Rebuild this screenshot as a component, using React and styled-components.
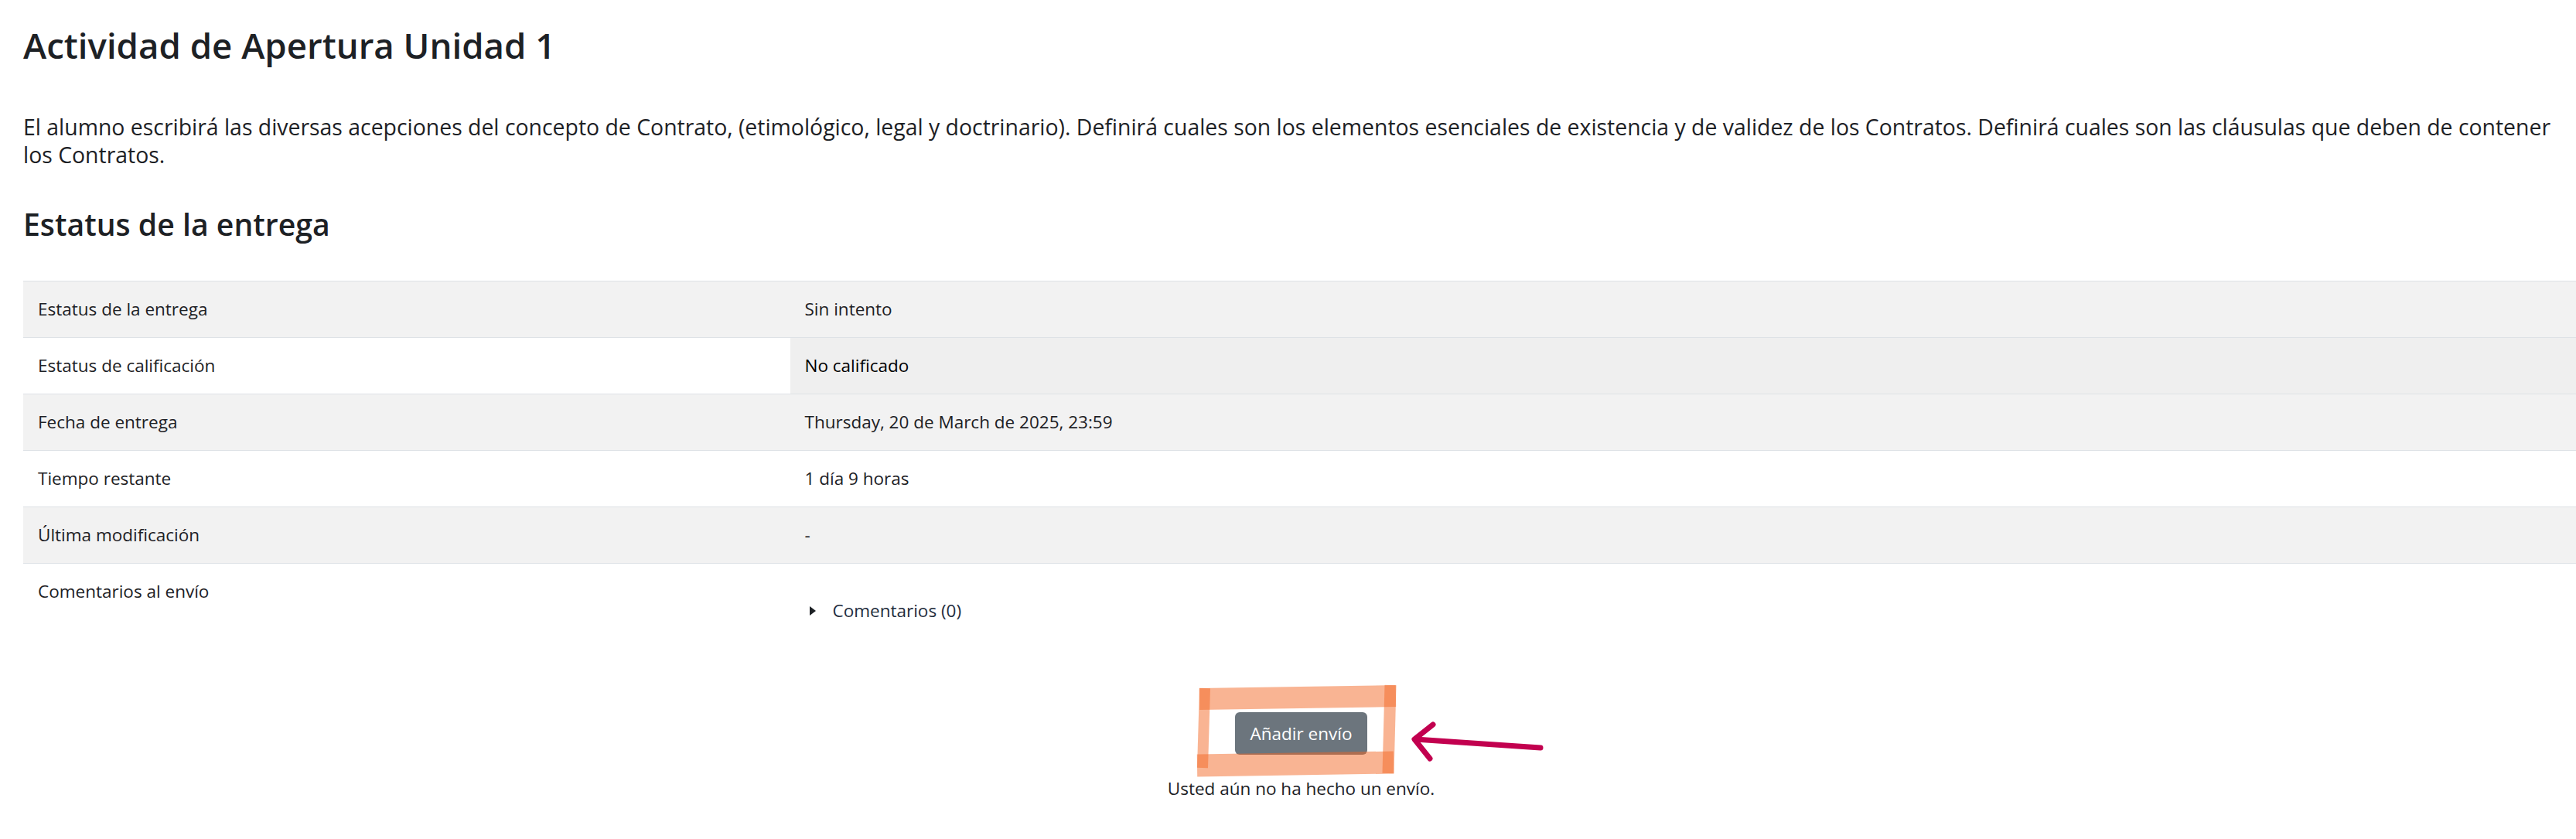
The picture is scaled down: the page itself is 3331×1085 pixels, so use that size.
import React from "react";
import styled, { createGlobalStyle } from "styled-components";

const GlobalStyle = createGlobalStyle`
  html, body {
    margin: 0;
    padding: 0;
    background: #ffffff;
    overflow: hidden;
  }
  body {
    font-family: "Open Sans", "Noto Sans", sans-serif;
    color: #1d2125;
  }
`;

const Page = styled.main`
  width: 3305px;
  padding: 31px 0 40px 30px;
  display: flex;
  flex-direction: column;
`;

const Title = styled.h2`
  margin: 0;
  font-size: 45.6px;
  font-weight: 600;
  line-height: 55px;
`;

const Intro = styled.p`
  margin: 60px 0 0;
  font-size: 28.4px;
  line-height: 36px;
`;

const SectionTitle = styled.h3`
  margin: 48px 0 0;
  font-size: 39.2px;
  font-weight: 600;
  line-height: 48px;
`;

const StatusTable = styled.table`
  margin-top: 49px;
  width: 100%;
  border-collapse: collapse;
  table-layout: fixed;
  font-size: 22.5px;
  line-height: 36px;
`;

const Row = styled.tr`
  background: ${(p) => (p.$striped ? "#f2f2f2" : "#ffffff")};
`;

const Label = styled.th`
  box-sizing: border-box;
  width: 30%;
  text-align: left;
  font-weight: 400;
  vertical-align: top;
  padding: 18px 19px;
  border-top: 1px solid #dee2e6;
`;

const Value = styled.td`
  box-sizing: border-box;
  vertical-align: top;
  padding: 18px 19px;
  border-top: 1px solid #dee2e6;
  background: ${(p) => (p.$tone === "muted" ? "#efefef" : "transparent")};
  color: ${(p) => (p.$tone === "muted" ? "#000000" : "inherit")};
`;

const CommentToggle = styled.a`
  display: flex;
  align-items: center;
  gap: 22px;
  margin-top: 25px;
  color: #1f2d3d;
  text-decoration: none;
  cursor: pointer;
`;

const Caret = styled.span`
  margin-left: 6px;
  width: 0;
  height: 0;
  border-left: 8px solid #1d2125;
  border-top: 6px solid transparent;
  border-bottom: 6px solid transparent;
`;

const Submission = styled.section`
  margin-top: 95px;
  display: flex;
  flex-direction: column;
  align-items: center;
`;

const Marked = styled.div`
  position: relative;
  display: inline-flex;
`;

const AddButton = styled.button`
  font-family: inherit;
  font-size: 22.5px;
  line-height: 36px;
  color: #ffffff;
  background: #6c757d;
  border: none;
  border-radius: 6px;
  padding: 9.5px 20px;
  cursor: pointer;
`;

const Annotation = styled.svg`
  position: absolute;
  left: -56px;
  top: -42px;
  width: 460px;
  height: 130px;
  overflow: visible;
  pointer-events: none;
`;

const Note = styled.p`
  margin: 26px 0 0;
  font-size: 22.5px;
  line-height: 36px;
`;

const rows = [
  { label: "Estatus de la entrega", value: "Sin intento" },
  { label: "Estatus de calificación", value: "No calificado", tone: "muted" },
  { label: "Fecha de entrega", value: "Thursday, 20 de March de 2025, 23:59" },
  { label: "Tiempo restante", value: "1 día 9 horas" },
  { label: "Última modificación", value: "-" },
];

function HighlightMarks() {
  const marker = "rgba(242, 101, 34, 0.49)";
  return (
    <Annotation viewBox="0 0 460 130" aria-hidden="true">
      <g stroke={marker} strokeLinecap="butt" fill="none">
        <line x1="10" y1="25" x2="264" y2="21" strokeWidth="28" />
        <line x1="7" y1="111" x2="261" y2="107" strokeWidth="29" />
        <line x1="17" y1="11" x2="14" y2="114" strokeWidth="14" />
        <line x1="257" y1="7" x2="254" y2="121" strokeWidth="15" />
      </g>
      <g stroke="#c2004f" strokeWidth="7" strokeLinecap="round" strokeLinejoin="round" fill="none">
        <line x1="451" y1="88" x2="289" y2="77" />
        <polyline points="312,58 288,77 308,102" />
      </g>
    </Annotation>
  );
}

export default function App() {
  return (
    <>
      <GlobalStyle />
      <Page>
        <Title>Actividad de Apertura Unidad 1</Title>
        <Intro>
          El alumno escribirá las diversas acepciones del concepto de Contrato, (etimológico, legal y
          doctrinario). Definirá cuales son los elementos esenciales de existencia y de validez de los
          Contratos. Definirá cuales son las cláusulas que deben de contener los Contratos.
        </Intro>
        <SectionTitle>Estatus de la entrega</SectionTitle>
        <StatusTable>
          <tbody>
            {rows.map((r, i) => (
              <Row key={r.label} $striped={i % 2 === 0}>
                <Label scope="row">{r.label}</Label>
                <Value $tone={r.tone}>{r.value}</Value>
              </Row>
            ))}
            <Row>
              <Label scope="row">Comentarios al envío</Label>
              <Value>
                <CommentToggle>
                  <Caret />
                  Comentarios (0)
                </CommentToggle>
              </Value>
            </Row>
          </tbody>
        </StatusTable>
        <Submission>
          <Marked>
            <AddButton type="button">Añadir envío</AddButton>
            <HighlightMarks />
          </Marked>
          <Note>Usted aún no ha hecho un envío.</Note>
        </Submission>
      </Page>
    </>
  );
}
